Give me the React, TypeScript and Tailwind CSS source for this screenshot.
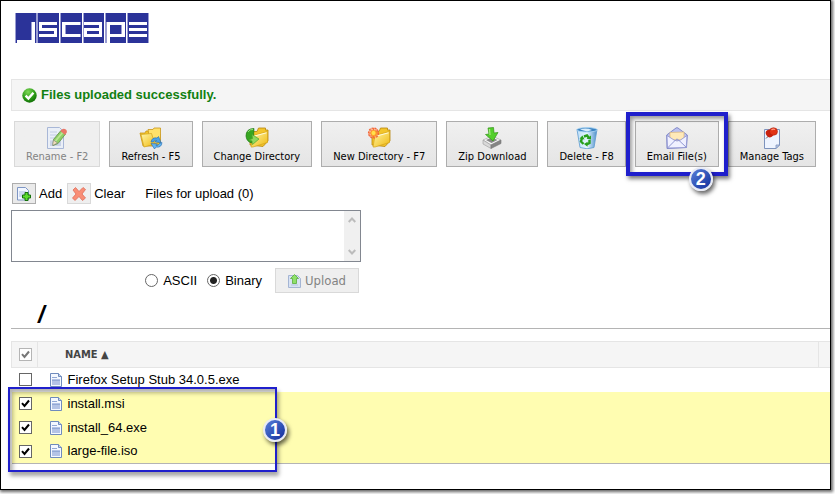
import { useState } from "react";
import type { ReactNode } from "react";

/* ---------- Icons ---------- */

function Logo() {
  return (
    <svg width="134" height="30" viewBox="0 0 134 30" shapeRendering="crispEdges" role="img" aria-label="jscape">
      <rect width="134" height="30" fill="#2b3399" />
      {/* tile separators */}
      <path d="M0 0h1v30H0zM21 0h2v30h-2zM45 0h1v30h-1zM68 0h1v30h-1zM90 0h1v30h-1zM112 0h1v30h-1zM133 0h1v30h-1z" fill="#9a9dd2" />
      <path d="M44 0h1v30h-1zM67 0h1v30h-1zM89 0h1v30h-1zM111 0h1v30h-1z" fill="#fff" />
      {/* letters */}
      <g fill="#fff">
        <rect x="17" y="9" width="3" height="21" />
        <rect x="2" y="27" width="18" height="3" />
        <rect x="24" y="9" width="18" height="3" />
        <rect x="24" y="9" width="3" height="9" />
        <rect x="24" y="15" width="18" height="3" />
        <rect x="39" y="15" width="3" height="9" />
        <rect x="24" y="21" width="18" height="3" />
        <rect x="47" y="9" width="18" height="3" />
        <rect x="47" y="9" width="3" height="15" />
        <rect x="47" y="21" width="18" height="3" />
        <rect x="69" y="9" width="18" height="3" />
        <rect x="84" y="9" width="3" height="15" />
        <rect x="69" y="15" width="18" height="3" />
        <rect x="69" y="15" width="3" height="9" />
        <rect x="69" y="21" width="18" height="3" />
        <rect x="92" y="9" width="18" height="3" />
        <rect x="92" y="9" width="3" height="21" />
        <rect x="107" y="9" width="3" height="15" />
        <rect x="92" y="21" width="18" height="3" />
        <rect x="114" y="9" width="18" height="3" />
        <rect x="114" y="15" width="18" height="3" />
        <rect x="114" y="21" width="18" height="3" />
      </g>
      {/* soft edges of the upright strokes */}
      <path d="M16 9h1v18h-1zM50 12h1v9h-1zM65 9h1v3h-1zM65 21h1v3h-1zM91 9h1v21h-1zM106 12h1v9h-1z" fill="#9a9dd2" />
    </svg>
  );
}

function SuccessIcon() {
  return (
    <svg width="15" height="15" viewBox="0 0 15 15" aria-hidden="true">
      <defs>
        <radialGradient id="ok" cx="0.4" cy="0.25" r="0.8">
          <stop offset="0" stopColor="#7ed957" />
          <stop offset="0.6" stopColor="#2b9a16" />
          <stop offset="1" stopColor="#0e6a05" />
        </radialGradient>
      </defs>
      <circle cx="7.5" cy="7.5" r="7.2" fill="url(#ok)" />
      <path d="M3.6 7.6l2.8 2.9 5-5.8" fill="none" stroke="#fff" strokeWidth="2.4" />
    </svg>
  );
}

function RenameIcon() {
  return (
    <svg width="22" height="22" viewBox="0 0 22 22" aria-hidden="true" className="opacity-70">
      <path d="M1.500 .5h12l4 4v17h-16z" fill="#e9effb" stroke="#8ba0cd" />
      <path d="M4 5h7M4 8h9M4 11h7M4 14h5" stroke="#b3c1e2" />
      <path d="M4 14h11v5H4z" fill="#b9c7e6" />
      <path d="M7.500 12.500l7.500-9 4.500 3.500-7.500 9.500-5 2z" fill="#66c32e" stroke="#3b7a17" />
      <path d="M9.500 14l7.500-9" stroke="#a7e56d" strokeWidth="1.800" />
      <path d="M7.500 13l4 3-5 2.500z" fill="#f3d8a5" stroke="#555" strokeWidth=".6" />
      <path d="M14.500 4l4.500 4 1.800-2.500q.5-3-2-3.500-2.500-.8-4.300 2z" fill="#e8452f" />
    </svg>
  );
}

function FolderShape() {
  return (
    <>
      <path d="M3 19V5.500h7l1.500-3.500h7V4h2.500v11l-5 5.500z" fill="#f3c52b" stroke="#b8860b" strokeWidth=".8" />
      <path d="M4 21l2-11.500L20.500 5.500v11L6 21z" fill="url(#folder)" stroke="#d4a41a" strokeWidth=".7" />
      <path d="M7 10.200l12.500-3.400" stroke="#fffbd8" />
    </>
  );
}

function RefreshIcon() {
  return (
    <svg width="24" height="22" viewBox="0 0 24 22" aria-hidden="true">
      <path d="M1 6h5l1-2h4v3h10v12H4z" fill="#f3c52b" stroke="#c8961a" strokeWidth=".8" />
      <path d="M9 2.500h5l1-1.500h6.500V15l-10 3z" fill="#ffe16a" stroke="#c8961a" strokeWidth=".8" />
      <path d="M2 7.500l10.500-1L16 17 5 20z" fill="url(#folder)" stroke="#d4a41a" strokeWidth=".7" />
      <path d="M12 15q1-5 6-4l1.500-1.500 2.500 6-6-.5 1.500-1.500q-2-1-3 1.500z" fill="#4ba3e8" stroke="#216ab0" strokeWidth=".6" />
      <path d="M23 15.500q-.5 5.500-6 4.500L15.500 22 12 16.500l6.500.5-1.500 1.500q2 .5 3.500-2z" fill="#62b5f3" stroke="#216ab0" strokeWidth=".6" />
    </svg>
  );
}

function ChangeDirIcon() {
  return (
    <svg width="24" height="22" viewBox="0 0 24 22" aria-hidden="true">
      <g transform="translate(2 -1)"><FolderShape /></g>
      <path d="M9 1.500Q1 1.500 1 9q.5 5.500 5.500 7l2-6.500z" fill="#37a621" stroke="#1d7a10" strokeWidth=".7" />
      <path d="M3 5q2-3 5-2.500" stroke="#95e07f" fill="none" />
      <path d="M7 7.500l7 4.500-6.500 5.500-.5-3.500-3-1 3.500-1.500z" fill="#8fd85e" stroke="#52a52c" strokeWidth=".7" />
    </svg>
  );
}

function NewDirIcon() {
  return (
    <svg width="24" height="22" viewBox="0 0 24 22" aria-hidden="true">
      <g transform="translate(2 -1)"><FolderShape /></g>
      <circle cx="6.500" cy="6" r="5" fill="#ff8a4a" fillOpacity=".55" stroke="#f0643a" strokeWidth="1.200" strokeDasharray="2 1" />
      <path d="M6.500 1v10M1.500 6h10M3 2.500l7 7M10 2.500l-7 7" stroke="#ff6a35" strokeWidth="1" />
      <circle cx="6.500" cy="6" r="2.600" fill="#ffe14d" stroke="#ff9b25" />
    </svg>
  );
}

function ZipIcon() {
  return (
    <svg width="20" height="22" viewBox="0 0 20 22" aria-hidden="true">
      <path d="M1 13l9-4 9 4-10 5z" fill="#f4f4f4" stroke="#aaa" strokeWidth=".7" />
      <path d="M4 13l6-2.500 5.500 2.500L9.500 16z" fill="#888" />
      <path d="M1 13l8 5v3.500L1 17z" fill="#d9d9d9" stroke="#9b9b9b" strokeWidth=".6" />
      <path d="M9 18l10-5v3.500l-10 5z" fill="#858585" stroke="#777" strokeWidth=".6" />
      <path d="M6 1l5.500-.5.5 5.500 4-.5-5 8.500L3.500 7.500l3.500-.5z" fill="#53cf2c" stroke="#349317" strokeWidth=".7" />
      <path d="M7.500 2l.5 6" stroke="#a4ef7f" strokeWidth="1.200" />
    </svg>
  );
}

function DeleteIcon() {
  return (
    <svg width="22" height="22" viewBox="0 0 22 22" aria-hidden="true">
      <defs>
        <linearGradient id="bin" x1="0" x2="1">
          <stop offset="0" stopColor="#bfe0f8" />
          <stop offset=".5" stopColor="#e6f5ff" />
          <stop offset="1" stopColor="#4c8fcb" />
        </linearGradient>
      </defs>
      <path d="M1 2.500l3 18q7 2.500 14 0l3-18z" fill="url(#bin)" stroke="#5d9bd0" strokeWidth=".8" />
      <ellipse cx="11" cy="2.800" rx="10.200" ry="2.200" fill="#3b83c2" stroke="#a8d3f2" strokeWidth=".9" />
      <path d="M4 2.500q6-2 12 .5l-5 1.500z" fill="#d9edfb" />
      <path d="M8 9.500l3-1 2 2.500M13.500 13v3L10.500 17.500M7.500 17L5 14.500l1-3.500" fill="none" stroke="#28a01b" strokeWidth="2.400" />
      <path d="M15 8.500v4l-4.500-.8zM11.500 14.800v5l-3.500-2.800zM3.500 11.500l3-3 2 4z" fill="#28a01b" />
    </svg>
  );
}

function EmailIcon() {
  return (
    <svg width="22" height="22" viewBox="0 0 22 22" aria-hidden="true">
      <path d="M.7 8L10 1q1-.7 2 0l9.300 7L20.500 20.500 1 21.500z" fill="#bcc1f0" stroke="#7b82c4" strokeWidth=".9" />
      <path d="M4 5.500l14-.5v8H4z" fill="#ffe9b8" stroke="#dcb878" strokeWidth=".7" />
      <path d="M1 8.500l7 4.500 3 1 3.500-1 6.500-4.500-.8 12L1.500 21z" fill="#f0f1ff" stroke="#8b91cf" strokeWidth=".8" />
      <path d="M1.500 21l8.500-8.500q1-.8 2 0l8.500 8" fill="none" stroke="#9097d2" />
    </svg>
  );
}

function TagsIcon() {
  return (
    <svg width="18" height="22" viewBox="0 0 18 22" aria-hidden="true">
      <path d="M1.500 2.500h15V18l-3.500 3.500H1.500z" fill="#eef4ff" stroke="#7d93bd" />
      <path d="M16.500 18H13v3.500z" fill="#bacce9" stroke="#7d93bd" strokeWidth=".8" />
      <path d="M6 8.500L3 11.500" stroke="#666" />
      <ellipse cx="6.500" cy="6.500" rx="3.500" ry="4" fill="#c92210" transform="rotate(-35 6.500 6.500)" />
      <ellipse cx="10.500" cy="4.500" rx="4" ry="3.800" fill="#e23417" stroke="#a31a08" strokeWidth=".5" />
      <path d="M8.500 3q1.500-1.500 3.500-.5" stroke="#ff9c85" strokeWidth="1.200" fill="none" />
    </svg>
  );
}

function FileIcon() {
  return (
    <svg width="12" height="14" viewBox="0 0 12 14" aria-hidden="true">
      <path d="M.5.5h8l3 3v10H.5z" fill="#f4f8ff" stroke="#6f8bbd" />
      <path d="M8.500.5v3h3" fill="#c5d3ec" stroke="#6f8bbd" />
      <path d="M2 6h8v6H2z" fill="#b4c3e6" />
      <path d="M2 4.500h5M2 7.500h8" stroke="#93a9d6" />
    </svg>
  );
}

function AddIcon() {
  return (
    <svg width="14" height="14" viewBox="0 0 14 14" aria-hidden="true">
      <path d="M.5.5h8l3 3v9.500H.5z" fill="#f1f6ff" stroke="#7e96c4" />
      <path d="M2 5h7M2 7h6M2 9h4" stroke="#a9bbdf" />
      <path d="M8 5.500h3v2.500h2.500v3H11v2.500H8V11H5.500V8H8z" fill="#5ddc2e" stroke="#16710a" />
    </svg>
  );
}

function ClearIcon() {
  return (
    <svg width="14" height="14" viewBox="0 0 14 14" aria-hidden="true">
      <path d="M3.500.5L7 4.500 11 .5l2.500 2L10 7l3.500 4-3 2.500L7 9.500l-4 4L.5 11 4 7 1 3z" fill="#f98e76" stroke="#dd6d5b" strokeWidth=".8" strokeLinejoin="round" />
    </svg>
  );
}

function UploadIcon() {
  return (
    <svg width="13" height="14" viewBox="0 0 13 14" aria-hidden="true">
      <path d="M.5 1.500h9l3 3v9H.5z" fill="#d8e2f3" stroke="#a4b5d4" />
      <path d="M3 11h7" stroke="#b3c3e0" />
      <path d="M6.500.5l4 4H8.500v5h-4v-5h-2z" fill="#8ee06a" stroke="#59ad3a" strokeWidth=".8" />
    </svg>
  );
}

/* ---------- Controls ---------- */

type ToolButtonProps = {
  label: string;
  icon: ReactNode;
  disabled?: boolean;
};

function ToolButton({ label, icon, disabled }: ToolButtonProps) {
  return (
    <button
      type="button"
      disabled={disabled}
      className="flex h-[46px] flex-col items-center justify-center whitespace-nowrap border border-[#adadad] bg-gradient-to-b from-[#f0f0f0] to-[#e5e5e5] px-[11px] pt-[3px] font-['DejaVu_Sans_Condensed','DejaVu_Sans',sans-serif] text-[11px] leading-4 text-black disabled:border-[#d9d9d9] disabled:from-[#efefef] disabled:to-[#efefef] disabled:text-[#838383]"
    >
      {icon}
      {label}
    </button>
  );
}

function Badge({ number, className }: { number: string; className: string }) {
  return (
    <span
      className={`absolute flex size-6 items-center justify-center rounded-full border-2 border-[#e8ebf5] bg-gradient-to-br from-[#5a7fd8] to-[#142b9c] text-lg leading-5 font-bold text-white shadow-[2px_3px_4px_rgba(0,0,0,0.6)] ${className}`}
    >
      {number}
    </span>
  );
}

function CheckBox({ checked, onChange, label, muted }: { checked: boolean; onChange: () => void; label: string; muted?: boolean }) {
  return (
    <span className="relative block size-[13px]">
      <input
        type="checkbox"
        checked={checked}
        onChange={onChange}
        aria-label={label}
        className={`block size-[13px] appearance-none border bg-white ${muted ? "border-[#b5b5b5]" : "border-[#666]"}`}
      />
      {checked && (
        <svg width="13" height="13" viewBox="0 0 13 13" aria-hidden="true" className="pointer-events-none absolute inset-0">
          <path d="M3 6.200l2.500 2.800L10 3.500" fill="none" stroke={muted ? "#777" : "#000"} strokeWidth="2" />
        </svg>
      )}
    </span>
  );
}

const radioClass =
  "size-[13px] appearance-none rounded-full border border-[#666] bg-white checked:bg-[radial-gradient(circle,#222_0_3px,#fff_4px)]";

const initialFiles = [
  { name: "Firefox Setup Stub 34.0.5.exe", selected: false },
  { name: "install.msi", selected: true },
  { name: "install_64.exe", selected: true },
  { name: "large-file.iso", selected: true },
];

export default function App() {
  const [files, setFiles] = useState(initialFiles);
  const [allChecked, setAllChecked] = useState(true);
  const [mode, setMode] = useState("binary");

  const toggleFile = (name: string) => {
    setFiles(files.map((f) => (f.name === name ? { ...f, selected: !f.selected } : f)));
  };

  const toggleAll = () => {
    setFiles(files.map((f) => ({ ...f, selected: !allChecked })));
    setAllChecked(!allChecked);
  };

  return (
    <div className="flex min-h-screen flex-col bg-white pr-1 pb-1 font-['Liberation_Sans',Arial,sans-serif] text-[13px] leading-4 text-black">
      {/* Shared folder fill */}
      <svg width="0" height="0" className="absolute" aria-hidden="true">
        <defs>
          <linearGradient id="folder" x1="0" y1="0" x2="1" y2="1">
            <stop offset="0" stopColor="#fff6a8" />
            <stop offset="1" stopColor="#f0b90f" />
          </linearGradient>
        </defs>
      </svg>

      <main className="flex-1 border border-black pl-[10px] shadow-[1px_1px_3px_1px_rgba(0,0,0,0.6)]">
        <header className="px-1 pt-3">
          <Logo />
        </header>

        {/* Status message */}
        <div role="status" className="mt-9 flex h-8 items-center gap-1 border border-r-0 border-[#e5e5e5] bg-[#f5f5f5] pl-[10px] font-bold text-[#118011]">
          <SuccessIcon />
          Files uploaded successfully.
        </div>

        {/* Toolbar */}
        <div className="mt-[10px] flex gap-[9px] pl-[3px]">
          <ToolButton label="Rename - F2" icon={<RenameIcon />} disabled />
          <ToolButton label="Refresh - F5" icon={<RefreshIcon />} />
          <ToolButton label="Change Directory" icon={<ChangeDirIcon />} />
          <ToolButton label="New Directory - F7" icon={<NewDirIcon />} />
          <ToolButton label="Zip Download" icon={<ZipIcon />} />
          <ToolButton label="Delete - F8" icon={<DeleteIcon />} />
          <div className="relative">
            <ToolButton label="Email File(s)" icon={<EmailIcon />} />
            <div className="pointer-events-none absolute -inset-[9px] border-4 border-[#1f1fcc] shadow-[2px_3px_4px_rgba(0,0,0,0.5),inset_2px_3px_4px_rgba(0,0,0,0.4)]" />
            <Badge number="2" className="-bottom-6 left-[54px]" />
          </div>
          <ToolButton label="Manage Tags" icon={<TagsIcon />} />
        </div>

        {/* Upload queue */}
        <div className="mt-4 flex items-center pl-px">
          <button type="button" id="add" className="flex h-[21px] w-6 items-center justify-center border border-[#adadad] bg-[#eaeaea]">
            <AddIcon />
          </button>
          <label htmlFor="add" className="ml-[3px]">Add</label>
          <button type="button" id="clear" disabled className="ml-[5px] flex h-[21px] w-6 items-center justify-center border border-[#d9d9d9] bg-[#efefef]">
            <ClearIcon />
          </button>
          <label htmlFor="clear" className="ml-[3px]">Clear</label>
          <label htmlFor="queue" className="ml-5">Files for upload (0)</label>
        </div>
        <div className="mt-[6px] flex h-[52px] w-[350px] border border-[#828790]">
          <textarea id="queue" readOnly className="block flex-1 resize-none outline-none" />
          <div className="flex w-4 flex-col items-center justify-between bg-[#f0f0f0] py-[6px]">
            <svg width="8" height="6" viewBox="0 0 8 6" aria-hidden="true">
              <path d="M.7 5L4 1.500 7.300 5" fill="none" stroke="#bcbcbc" strokeWidth="2" />
            </svg>
            <svg width="8" height="6" viewBox="0 0 8 6" aria-hidden="true">
              <path d="M.7 1L4 4.500 7.300 1" fill="none" stroke="#bcbcbc" strokeWidth="2" />
            </svg>
          </div>
        </div>
        <div className="mt-[6px] flex w-[350px] items-center justify-end pr-[2px]">
          <label className="flex items-center gap-[5px]">
            <input type="radio" name="mode" checked={mode === "ascii"} onChange={() => setMode("ascii")} className={radioClass} />
            ASCII
          </label>
          <label className="ml-[10px] flex items-center gap-[5px]">
            <input type="radio" name="mode" checked={mode === "binary"} onChange={() => setMode("binary")} className={radioClass} />
            Binary
          </label>
          <button type="button" disabled className="ml-[13px] flex h-[25px] items-center gap-1 border border-[#d9d9d9] bg-[#efefef] px-3 font-['DejaVu_Sans_Condensed','DejaVu_Sans',sans-serif] text-[#838383]">
            <UploadIcon />
            Upload
          </button>
        </div>

        {/* Current path */}
        <h1 className="mt-[10px] border-b border-[#b4b4b4] pb-px pl-[27px] text-2xl leading-6 font-bold italic">/</h1>

        {/* Directory listing */}
        <div className="relative mt-3">
          <table className="w-full border-collapse border-b border-[#b4b4b4] text-left">
            <thead>
              <tr className="h-[26px] border border-r-0 border-[#e5e5e5] bg-[#f5f5f5]">
                <th className="w-[26px] border-r border-[#e5e5e5] pl-[7px]">
                  <CheckBox checked={allChecked} onChange={toggleAll} label="Select all" muted />
                </th>
                <th className="pl-[27px] font-['DejaVu_Sans_Condensed','DejaVu_Sans',sans-serif] text-[11px] text-[#444]">NAME ▲</th>
                <th className="w-3 border-l border-[#e5e5e5]" />
              </tr>
            </thead>
            <tbody>
              {files.map((file) => (
                <tr key={file.name} className={file.selected ? "h-6 bg-[#fffdb1]" : "h-6"}>
                  <td className="pl-[7px]">
                    <CheckBox checked={file.selected} onChange={() => toggleFile(file.name)} label={file.name} />
                  </td>
                  <td colSpan={2} className="pl-3">
                    <span className="flex items-center gap-[6px]">
                      <FileIcon />
                      {file.name}
                    </span>
                  </td>
                </tr>
              ))}
            </tbody>
          </table>
          <div className="pointer-events-none absolute -bottom-2 -left-[3px] h-[85px] w-[269px] border-2 border-[#1f1fcc] shadow-[2px_4px_4px_rgba(0,0,0,0.35),inset_3px_4px_4px_rgba(0,0,0,0.3)]">
            <Badge number="1" className="top-[29px] -right-3" />
          </div>
        </div>
      </main>
    </div>
  );
}
